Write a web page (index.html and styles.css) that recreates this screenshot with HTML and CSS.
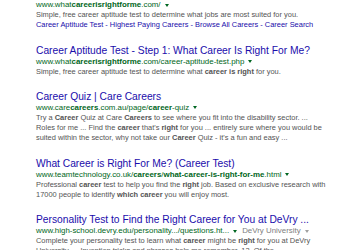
FILE: index.html
```html
<!DOCTYPE html>
<html>
<head>
<meta charset="utf-8">
<link rel="stylesheet" href="styles.css">
</head>
<body>
<div class="results">
  <div class="result first">
    <div class="url">www.what<b>careerisrightforme</b>.com/<span class="arrow"></span></div>
    <div class="snippet">Simple, free career aptitude test to determine what jobs are most suited for you.</div>
    <div class="sitelinks">Career Aptitude Test - Highest Paying Careers - Browse All Careers - Career Search</div>
  </div>
  <div class="result">
    <div class="title">Career Aptitude Test - Step 1: What Career Is Right For Me?</div>
    <div class="url">www.what<b>careerisrightforme</b>.com/career-aptitude-test.php<span class="arrow"></span></div>
    <div class="snippet">Simple, free career aptitude test to determine what <b>career is right</b> for you.</div>
  </div>
  <div class="result">
    <div class="title">Career Quiz | Care Careers</div>
    <div class="url">www.care<b>careers</b>.com.au/page/<b>career</b>-quiz<span class="arrow"></span></div>
    <div class="snippet">Try a <b>Career</b> Quiz at Care <b>Careers</b> to see where you fit into the disability sector. ...<br>Roles for me ... Find the <b>career</b> that's <b>right</b> for you ... entirely sure where you would be<br>suited within the sector, why not take our <b>Career</b> Quiz - it's a fun and easy ...</div>
  </div>
  <div class="result">
    <div class="title">What Career is Right For Me? (Career Test)</div>
    <div class="url">www.teamtechnology.co.uk/<b>careers</b>/<b>what-career-is-right-for-me</b>.html<span class="arrow"></span></div>
    <div class="snippet">Professional <b>career</b> test to help you find the <b>right</b> job. Based on exclusive research with<br>17000 people to identify <b>which career</b> you will enjoy most.</div>
  </div>
  <div class="result">
    <div class="title">Personality Test to Find the Right Career for You at DeVry ...</div>
    <div class="url">www.high-school.devry.edu/personality.../questions.ht...<span class="arrow"></span><span class="source">DeVry University<span class="arrow gray"></span></span></div>
    <div class="snippet">Complete your personality test to learn what <b>career</b> might be <b>right</b> for you at DeVry<br>University. ... Invention tricks and phrases help me remember. 12. Of the ...</div>
  </div>
</div>
</body>
</html>
```
FILE: styles.css
```css
html, body {
  margin: 0;
  padding: 0;
  background: #ffffff;
  overflow: hidden;
}
body {
  font-family: "Liberation Sans", Arial, sans-serif;
  width: 350px;
  height: 250px;
}
.results {
  display: flex;
  flex-direction: column;
  gap: 13.7px;
  padding-left: 36px;
}
.result {
  display: flex;
  flex-direction: column;
  white-space: nowrap;
}
.title {
  font-size: 10.25px;
  line-height: 12px;
  color: #1a0dab;
}
.url {
  font-size: 7.9px;
  line-height: 10px;
  color: #006621;
  display: flex;
  align-items: center;
}
.url b {
  font-weight: bold;
}
.arrow {
  display: inline-block;
  width: 0;
  height: 0;
  margin-left: 4px;
  border-left: 2.5px solid transparent;
  border-right: 2.5px solid transparent;
  border-top: 3px solid #006621;
}
.arrow.gray {
  border-top-color: #a0a0a0;
}
.source {
  color: #808080;
  margin-left: 5px;
  display: flex;
  align-items: center;
}
.snippet {
  font-size: 7.45px;
  line-height: 10.4px;
  color: #545454;
}
.snippet b {
  font-weight: bold;
}
.sitelinks {
  font-size: 7.45px;
  line-height: 10.4px;
  color: #1a0dab;
}
```
